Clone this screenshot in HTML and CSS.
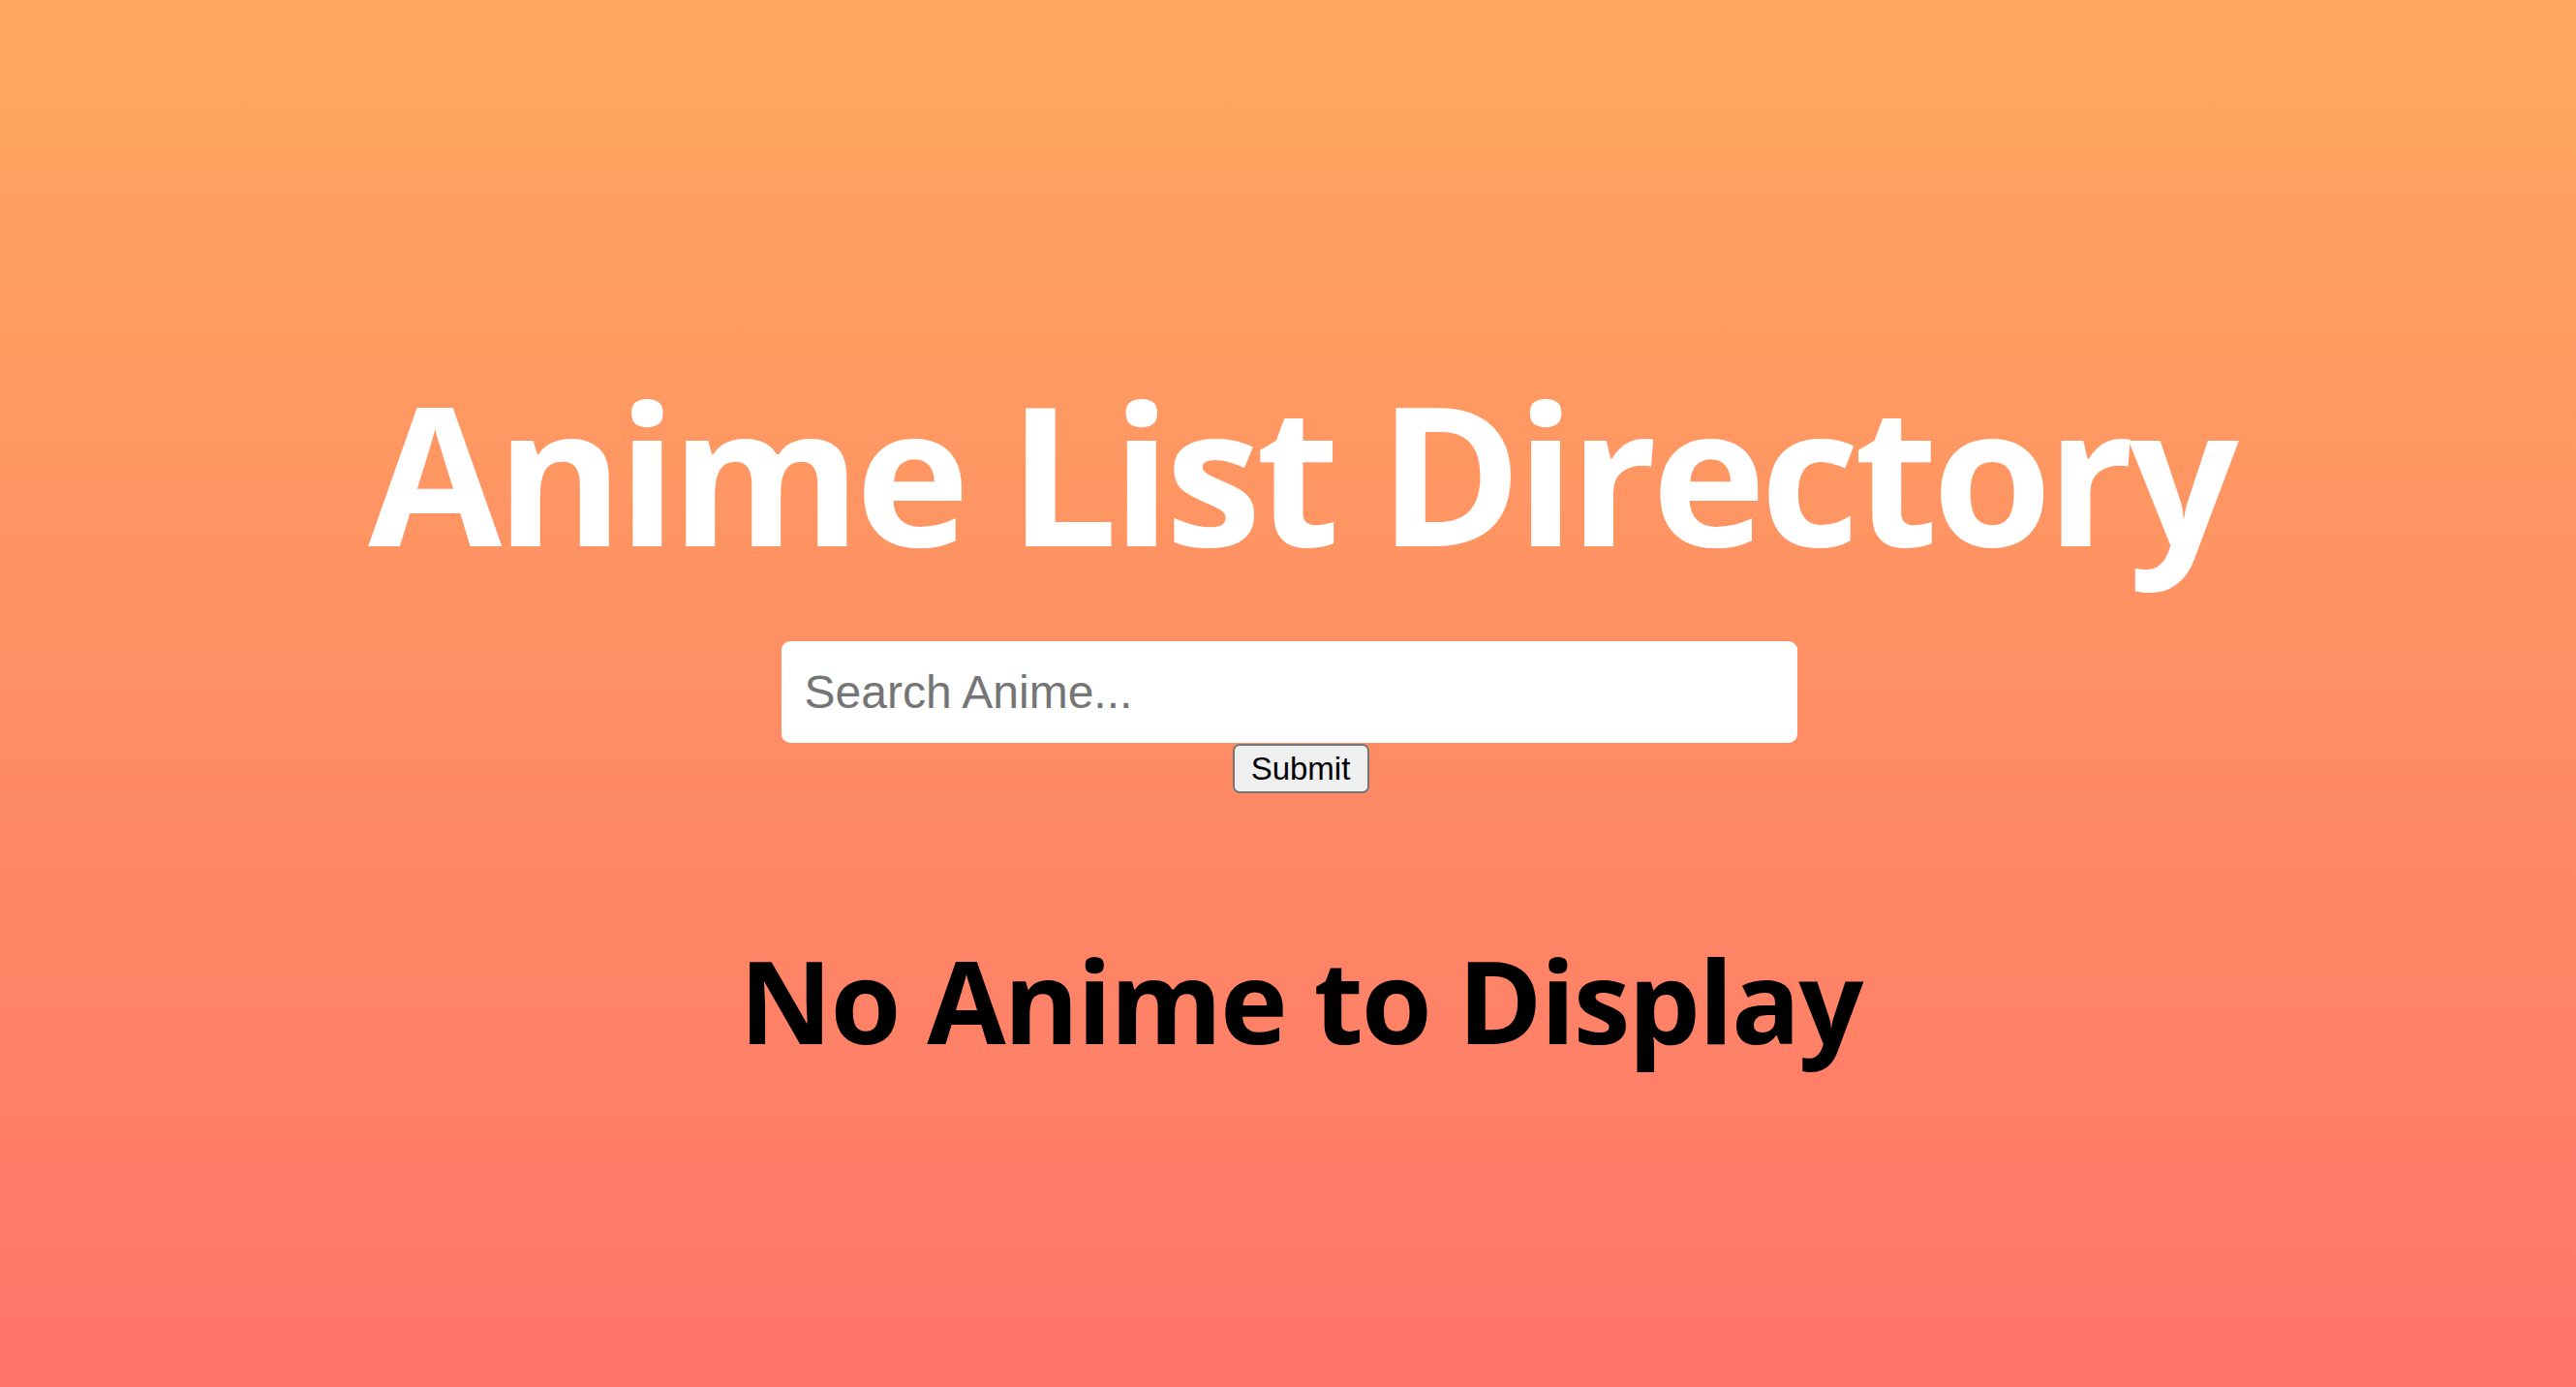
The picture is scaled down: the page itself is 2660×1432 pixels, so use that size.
FILE: index.html
```html
<!DOCTYPE html>
<html lang="en">
<head>
<meta charset="utf-8">
<title>Anime List Directory</title>
<link rel="stylesheet" href="styles.css">
</head>
<body>
<main class="page">
  <h1 class="title">Anime List Directory</h1>
  <form class="search">
    <input class="search-input" type="text" placeholder="Search Anime...">
    <button class="search-btn" type="button">Submit</button>
  </form>
  <h2 class="empty">No Anime to Display</h2>
</main>
</body>
</html>
```

FILE: styles.css
```css
html, body {
  margin: 0;
  padding: 0;
}
body {
  min-height: 100vh;
  background: linear-gradient(to bottom, #ffa85f, #ff7469);
  font-family: "Open Sans", "Noto Sans", sans-serif;
}
.page {
  display: flex;
  flex-direction: column;
  align-items: center;
  padding-top: 387px;
  padding-left: 26px;
}
.title {
  margin: 0;
  font-size: 200px;
  line-height: 200px;
  font-weight: 700;
  color: #ffffff;
  letter-spacing: -6px;
  white-space: nowrap;
}
.search {
  margin-top: 75px;
  display: flex;
  flex-direction: column;
  align-items: center;
  gap: 1px;
}
.search-input {
  box-sizing: border-box;
  width: 1049px;
  height: 105px;
  margin-right: 24px;
  border: none;
  border-radius: 9px;
  padding: 0 24px;
  font-family: "Liberation Sans", Arial, sans-serif;
  font-size: 48px;
  color: #222;
  background: #fff;
  outline: none;
}
.search-input::placeholder {
  color: #757575;
}
.search-btn {
  box-sizing: border-box;
  width: 141px;
  height: 51px;
  padding: 0;
  border: 2px solid #767676;
  border-radius: 7px;
  background: #efefef;
  font-family: "Liberation Sans", Arial, sans-serif;
  font-size: 33px;
  color: #000;
}
.empty {
  margin: 155px 0 0;
  font-size: 118px;
  line-height: 118px;
  font-weight: 700;
  color: #000;
  letter-spacing: -2px;
  white-space: nowrap;
}
```
